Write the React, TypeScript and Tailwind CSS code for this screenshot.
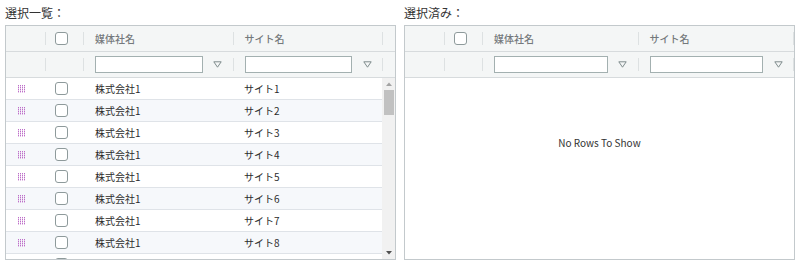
import React from "react";

const font = { fontFamily: '"Noto Sans CJK JP", "Noto Sans", sans-serif' };

function DragIcon() {
  const dots = [];
  for (let r = 0; r < 4; r++)
    for (let c = 0; c < 4; c++) dots.push(<rect key={`${r}-${c}`} x={c * 2} y={r * 2} width="1" height="1.4" />);
  return (
    <svg width="8" height="8" viewBox="0 0 8 8" fill="#bd6fc9">
      {dots}
    </svg>
  );
}

function FilterIcon() {
  return (
    <svg width="9" height="7" viewBox="0 0 9 7" fill="none" stroke="#7f8c8d" strokeWidth="1">
      <path d="M0.8 0.8 H8.2 L4.5 6.2 Z" strokeLinejoin="round" />
    </svg>
  );
}

function Checkbox() {
  return <div className="w-[13px] h-[13px] rounded-[3px] border border-[#8e9a9b] bg-white" />;
}

function Sep() {
  return <div className="w-px h-[13px] bg-[#dde1e2] shrink-0" />;
}

function FilterCell() {
  return (
    <div className="flex-1 flex items-center pl-[11px] min-w-0">
      <div className="flex-1 h-[17px] border border-[#a3b0b0] bg-white min-w-0" />
      <div className="w-[30px] flex justify-center">
        <FilterIcon />
      </div>
    </div>
  );
}

function HeaderRows({ scroll }: { scroll: boolean }) {
  return (
    <>
      <div className="h-[26px] flex items-center bg-[#f4f6f6] border-b border-[#d7dbdd] shrink-0">
        <div className="w-[39px]" />
        <Sep />
        <div className="w-[37px] pl-[9px] flex items-center">
          <Checkbox />
        </div>
        <Sep />
        <div className="flex-1 pl-[11px] text-[10px] font-medium text-[#74797c]">媒体社名</div>
        <Sep />
        <div className="flex-1 pl-[11px] text-[10px] font-medium text-[#74797c]">サイト名</div>
        <Sep />
        {scroll && <div className="w-[12px]" />}
      </div>
      <div className="h-[26px] flex items-center bg-[#f4f6f6] border-b border-[#d7dbdd] shrink-0">
        <div className="w-[39px]" />
        <Sep />
        <div className="w-[37px]" />
        <Sep />
        <FilterCell />
        <Sep />
        <FilterCell />
        <Sep />
        {scroll && <div className="w-[12px]" />}
      </div>
    </>
  );
}

function Row({ i, partial }: { i: number; partial?: boolean }) {
  return (
    <div
      className={`h-[22px] flex items-center border-b border-[#dfe3e8] shrink-0 ${
        i % 2 === 1 ? "bg-[#f6f8fb]" : "bg-white"
      }`}
    >
      <div className="w-[40px] pl-[12px] flex items-center">{!partial && <DragIcon />}</div>
      <div className="w-[38px] pl-[9px] flex items-center">
        <Checkbox />
      </div>
      {!partial && (
        <>
          <div className="flex-1 pl-[11px] text-[10px] text-[#2b2b2b]">株式会社1</div>
          <div className="flex-1 pl-[11px] text-[10px] text-[#2b2b2b]">サイト{i + 1}</div>
        </>
      )}
    </div>
  );
}

function ScrollBar() {
  return (
    <div className="w-[13px] bg-[#f1f1f1] flex flex-col items-center shrink-0">
      <div className="h-[12px] flex items-center justify-center">
        <svg width="6" height="4" viewBox="0 0 6 4">
          <path d="M0 4 L3 0.5 L6 4 Z" fill="#a3a3a3" />
        </svg>
      </div>
      <div className="w-[10px] h-[25px] bg-[#c1c1c1]" />
      <div className="flex-1" />
      <div className="h-[13px] flex items-center justify-center">
        <svg width="6" height="4" viewBox="0 0 6 4">
          <path d="M0 0 L6 0 L3 3.5 Z" fill="#505050" />
        </svg>
      </div>
    </div>
  );
}

export default function App() {
  return (
    <div className="w-[800px] h-[265px] bg-white px-[5px] grid grid-cols-2 gap-[8px]" style={font}>
      <div>
        <div className="h-[25px] flex items-center text-[12px] text-[#333]">選択一覧：</div>
        <div className="h-[235px] border border-[#c3c9cc] flex flex-col">
          <HeaderRows scroll />
          <div className="flex-1 flex min-h-0">
            <div className="flex-1 flex flex-col overflow-hidden">
              {Array.from({ length: 8 }).map((_, i) => (
                <Row key={i} i={i} />
              ))}
              <Row i={8} partial />
            </div>
            <ScrollBar />
          </div>
        </div>
      </div>
      <div>
        <div className="h-[25px] flex items-center text-[12px] text-[#333]">選択済み：</div>
        <div className="relative h-[235px] border border-[#c3c9cc] flex flex-col">
          <HeaderRows scroll={false} />
          <div className="flex-1" />
          <div className="absolute inset-0 flex items-center justify-center text-[10px] text-[#333]">
            No Rows To Show
          </div>
        </div>
      </div>
    </div>
  );
}
